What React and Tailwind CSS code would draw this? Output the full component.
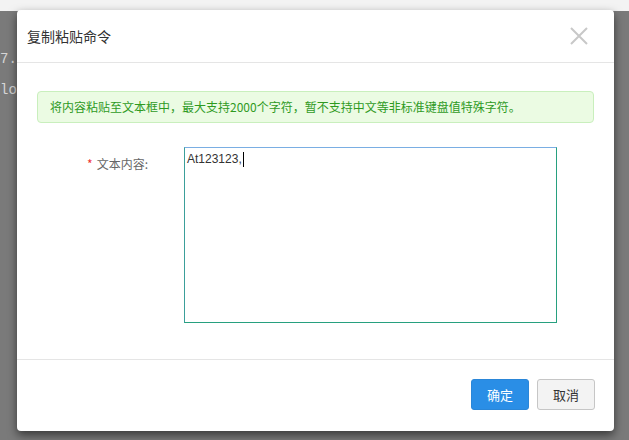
export default function App() {
  const cjk = { fontFamily: '"Microsoft YaHei", "Noto Sans CJK SC", "Liberation Sans", sans-serif' };
  return (
    <div className="relative w-[629px] h-[440px] overflow-hidden bg-[#7a7a7a]" style={cjk}>
      <div className="h-[11px] bg-[#f3f3f3]" />
      <div className="pt-[33px] font-['Liberation_Mono',monospace] text-[14px] leading-[31px] text-[#d6d6d6]">
        <div>7.</div>
        <div>lo</div>
      </div>

      <div className="absolute left-[17px] top-[10px] w-[597px] h-[421px] bg-white rounded-[4px] shadow-[0_4px_10px_rgba(0,0,0,0.55)] flex flex-col">
        <div className="h-[53px] shrink-0 border-b border-[#e5e5e5] flex items-center justify-between pl-[10px] pr-[26px]">
          <span className="text-[14px] text-[#333]">复制粘贴命令</span>
          <svg width="18" height="18" viewBox="0 0 18 18">
            <path d="M1 1 L17 17 M17 1 L1 17" stroke="#c8c8c8" strokeWidth="2" />
          </svg>
        </div>
        <div className="flex-1 px-[20px] pt-[28px]">
          <div className="h-[32px] rounded-[4px] border border-[#c9efbd] bg-[#ebfbe3] flex items-center pl-[12px] text-[12px] text-[#2f9a1f]">
            将内容粘贴至文本框中，最大支持2000个字符，暂不支持中文等非标准键盘值特殊字符。
          </div>
          <div className="mt-[24px] flex">
            <div className="w-[147px] pr-[36px] flex justify-end items-start pt-[8px] text-[12px] text-[#666]">
              <span className="text-[#e33] mr-[4px]">*</span>
              <span>文本内容:</span>
            </div>
            <div className="w-[373px] h-[176px] border border-[#27a07f] border-t-[#7aaee3] border-l-[#3b9f9a] px-[2px] pt-[3px]">
              <div className="flex items-center h-[16px]">
                <span className="font-['Liberation_Sans',sans-serif] text-[12px] text-[#333] leading-[16px]">At123123,</span>
                <span className="block w-px h-[15px] bg-black ml-px" />
              </div>
            </div>
          </div>
        </div>
        <div className="h-[72px] shrink-0 border-t border-[#e5e5e5] flex items-start justify-end gap-[8px] pt-[19px] pr-[19px]">
          <button className="w-[58px] h-[31px] rounded-[3px] bg-[#2a8ee6] border border-[#2a86d8] text-white text-[13px]">确定</button>
          <button className="w-[58px] h-[31px] rounded-[3px] bg-[#f3f3f3] border border-[#c6c6c6] text-[#333] text-[13px]">取消</button>
        </div>
      </div>
    </div>
  );
}
